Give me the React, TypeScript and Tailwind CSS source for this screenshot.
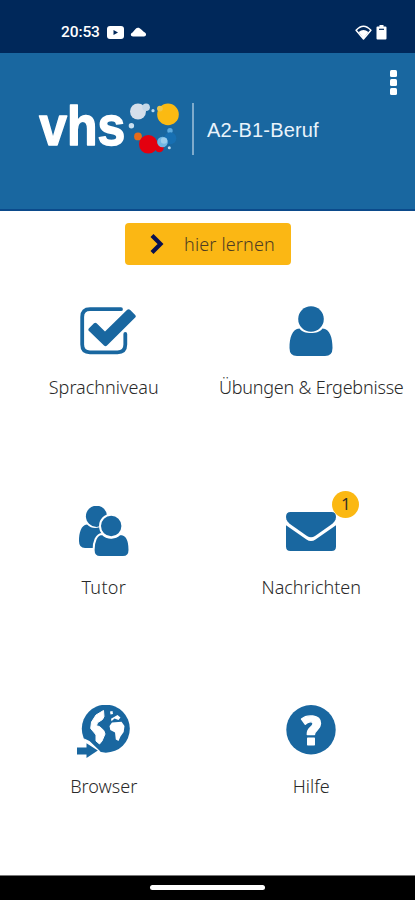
import type { ReactNode } from "react";

const BLUE = "#1967a0";

function StatusBar() {
  return (
    <div className="flex h-[53px] items-start justify-between bg-[#00285a] pr-[28px] pl-[61px] pt-[24px] text-white">
      <div className="flex h-[17px] items-center">
        <span className="w-[39px] whitespace-nowrap font-['Roboto',sans-serif] text-[15.5px] leading-[17px] font-medium tracking-[-0.1px]">
          20:53
        </span>
        <svg className="ml-[7px]" width="17" height="13" viewBox="0 0 17 13">
          <rect width="17" height="13" rx="3" fill="#fff" />
          <path d="M6.500 4v5l4.500-2.500z" fill="#00285a" />
        </svg>
        <svg className="mb-[2px] ml-[6px]" width="17" height="10" viewBox="0 0 17 10">
          <path d="M3 9.500C.5 9.500 0 6.500 2.500 5.500L5.500 2C7 .2 9.500 .4 11 2.300L14 5C17 6 16.500 9.500 14 9.500z" fill="#fff" />
        </svg>
      </div>
      <div className="flex h-[17px] items-center">
        <svg width="17" height="15" viewBox="0 0 17 15">
          <path d="M1.100 5.200Q8.500-2.800 15.900 5.200L8.500 14z" fill="none" stroke="#fff" strokeWidth="1.500" strokeLinejoin="round" />
          <path d="M3.600 7Q8.500 3.200 13.400 7L8.500 13.500z" fill="#fff" />
        </svg>
        <svg className="ml-[4px]" width="11" height="15" viewBox="0 0 11 15">
          <path d="M3.500 0h4v1.500H9.500Q10.500 1.500 10.500 2.500V13.500Q10.500 14.500 9.500 14.500H1.500Q.5 14.500.5 13.500V2.500Q.5 1.500 1.500 1.500H3.500z" fill="#fff" />
          <path d="M3 3.700h5v1.200H3z" fill="#00285a" />
        </svg>
      </div>
    </div>
  );
}

function VhsLogo() {
  return (
    <svg width="146" height="76" viewBox="35 88 146 76" className="shrink-0">
      <text x="39.200" y="144.800" textLength="86" lengthAdjust="spacingAndGlyphs" fontFamily="Liberation Sans, sans-serif" fontWeight="700" fontSize="55.500" fill="#fff" stroke="#fff" strokeWidth="1.500" strokeLinejoin="round">
        vhs
      </text>
      <circle cx="138" cy="111.500" r="8" fill="#d5dfeb" />
      <circle cx="146.100" cy="107.300" r="3.800" fill="#c4d8e8" />
      <circle cx="153" cy="110.700" r="1.600" fill="#b9d9ef" />
      <circle cx="168" cy="114.400" r="10.800" fill="#fbba12" />
      <circle cx="159.900" cy="108.600" r="2.900" fill="#eec64b" />
      <circle cx="131.400" cy="125.700" r="2.700" fill="#c9e0f1" />
      <circle cx="170" cy="130.700" r="2.700" fill="#5cabe0" />
      <circle cx="170.300" cy="138.300" r="6" fill="#176fb2" />
      <circle cx="138" cy="136.400" r="3.900" fill="#e66b19" />
      <circle cx="148.300" cy="144.300" r="9.300" fill="#e3000f" />
      <circle cx="159.300" cy="147.800" r="4.400" fill="#e3000f" />
      <circle cx="162.500" cy="142" r="5.300" fill="#70b7e4" />
      <circle cx="164" cy="140.600" r="3.200" fill="#9bcdec" />
      <circle cx="169.300" cy="147.700" r="1.500" fill="#b9d9ef" />
    </svg>
  );
}

function Header() {
  return (
    <header className="flex h-[158px] items-start border-b-2 border-[#0b4a8b] bg-[#1967a0] pl-[35px]">
      <div className="flex pt-[35px]">
        <VhsLogo />
      </div>
      <div className="mt-[50px] ml-[11px] h-[52px] w-[2px] bg-[#7fabcc]" />
      <div className="mt-[65px] ml-[13px] w-[113px] whitespace-nowrap font-['Liberation_Sans',Arial,sans-serif] text-[20px] leading-[24px] tracking-[0.15px] text-[#e9f3fb]">
        A2-B1-Beruf
      </div>
      <button aria-label="Menü" className="mt-[17px] mr-[18px] ml-auto flex flex-col gap-[2px]">
        <span className="size-[7px] rounded-[1.5px] bg-white" />
        <span className="size-[7px] rounded-[1.5px] bg-white" />
        <span className="size-[7px] rounded-[1.5px] bg-white" />
      </button>
    </header>
  );
}

function CheckIcon() {
  return (
    <svg width="56" height="50" viewBox="0 0 56 50">
      <path d="M41 3.200H10Q2.200 3.200 2.200 11V38.500Q2.200 46.300 10 46.300H37.500Q45.300 46.300 45.300 38.500V28" fill="none" stroke={BLUE} strokeWidth="3.800" strokeLinecap="round" />
      <path d="M9 22.300L14 17.300Q15.300 16 16.600 17.300L25 25.600L47.200 3.800Q48.600 2.500 50 3.800L55.200 8.900Q56.400 10.200 55.200 11.500L27 39.500Q25.500 40.900 24 39.500L9 25Q7.700 23.600 9 22.300Z" fill={BLUE} />
    </svg>
  );
}

function UserIcon() {
  return (
    <svg width="44" height="50" viewBox="0 0 44 50">
      <circle cx="22" cy="13" r="12.800" fill={BLUE} />
      <path d="M10.500 22.500C14 28.600 30 28.600 33.500 22.500C41 23 43.500 32 43.500 42Q43.500 50 36 50H8Q.5 50 .5 42C.5 32 3 23 10.500 22.500Z" fill={BLUE} />
    </svg>
  );
}

function UsersIcon() {
  return (
    <svg width="50" height="50" viewBox="0 0 50 50">
      <circle cx="17.500" cy="10.300" r="10.600" fill={BLUE} />
      <path d="M8 18.500C13 23.500 20 22.500 24 19L27 42H6Q0 42 0 35C0 27 2 19 8 18.500Z" fill={BLUE} />
      <g fill={BLUE} stroke="#fff" strokeWidth="2">
        <path d="M23.500 28C28 33 37 33 41 28C48 28 50.500 36 50.500 44Q50.500 51 44 51H21Q14.600 51 14.600 44C14.600 36 17 28 23.500 28Z" />
        <circle cx="32.200" cy="20" r="11.200" />
      </g>
    </svg>
  );
}

function MailIcon() {
  return (
    <svg width="50" height="39" viewBox="0 0 50 39">
      <path d="M4.500 0H45.500Q50 0 50 5C50 8.500 47.500 11 45 12.800L29 24Q25 26.500 21 24L5 12.800C2.500 11 0 8.500 0 5Q0 0 4.500 0Z" fill={BLUE} />
      <path d="M0 13.200L20.500 27.500Q25 30.500 29.500 27.500L50 13.200V34.500Q50 39 45.500 39H4.500Q0 39 0 34.500Z" fill={BLUE} />
    </svg>
  );
}

function GlobeIcon() {
  return (
    <svg width="53" height="53" viewBox="0 0 53 53">
      <circle cx="28.800" cy="23.700" r="24" fill={BLUE} />
      <g fill="#fff">
        <path d="M26.500 5.500L19 10L14.500 17L13.700 23.500L17.500 28L19 30V36L22.500 39L25 36L28 29L26.800 25.500L22.500 21.500L19.500 20.800L20.500 17.700L25.500 14.500L27 11.500Z" stroke="#fff" strokeLinejoin="round" />
        <path d="M33 6.500L35.500 6L36 9L33.500 9.500Z" />
        <path d="M34 13.800L40.500 10L43.500 12.500L41.500 15L37.500 13.500L34.500 16.200Z" />
        <path d="M35 17.500L44.500 16.800L47.500 21L46.700 27L43.500 31.500L41.500 36L38.800 34.500L38 27.500L33.300 25L32.500 21Z" />
        <path d="M7.200 33.500L12.500 36L23.500 46.500L12 53L2 49V38H7Z" />
      </g>
      <path d="M0 42.500H9.500V38.300L20.800 45.600L9.500 53V49.500H0Z" fill={BLUE} />
    </svg>
  );
}

function HelpIcon() {
  return (
    <svg width="50" height="50" viewBox="0 0 50 50">
      <circle cx="25" cy="24.800" r="24.700" fill={BLUE} />
      <path d="M15.500 14C20.500 9.500 34.500 9 34.500 18.500C34.500 24.500 28.500 25 28.500 29.500H21.300C20.800 22.500 27 22.200 27 18.800C27 15.800 22 16.500 19.300 19.300Z" fill="#fff" stroke="#fff" strokeWidth="1.400" strokeLinejoin="round" />
      <rect x="21" y="32.500" width="8" height="8" rx=".7" fill="#fff" />
    </svg>
  );
}

interface TileProps {
  icon: ReactNode;
  label: string;
  labelClass?: string;
  iconClass?: string;
  badge?: string;
}

function Tile({ icon, label, labelClass = "", iconClass = "", badge }: TileProps) {
  return (
    <div className="flex h-[199.6px] flex-col items-center">
      <div className={`relative flex h-[53px] items-start justify-center ${iconClass}`}>
        {icon}
        {badge && (
          <span className="absolute -top-[15px] -right-[23px] flex size-[27px] items-center justify-center rounded-full bg-[#fbb812] font-['Noto_Sans',sans-serif] text-[17px] text-[#363126]">
            {badge}
          </span>
        )}
      </div>
      <span className={`mt-[15px] whitespace-nowrap font-['Noto_Sans',sans-serif] text-[18px] leading-[26px] font-light text-[#292929] ${labelClass}`}>
        {label}
      </span>
    </div>
  );
}

export default function App() {
  return (
    <div className="flex h-[900px] w-[415px] flex-col overflow-hidden bg-white">
      <StatusBar />
      <Header />
      <main className="flex min-h-0 flex-1 flex-col">
        <button className="mt-[11.5px] ml-[125px] flex h-[42px] w-[166px] shrink-0 items-center rounded-[4px] bg-[#fbb714] pl-[25px]">
          <svg width="14" height="20" viewBox="0 0 14 20">
            <path d="M2 1.500L10.500 10L2 18.500" fill="none" stroke="#09104f" strokeWidth="4.200" />
          </svg>
          <span className="ml-[20px] whitespace-nowrap font-['Noto_Sans',sans-serif] text-[18px] leading-[26px] font-light tracking-[0.15px] text-[#4f3c22]">
            hier lernen
          </span>
        </button>
        <div className="mt-[41.5px] grid grid-cols-2">
          <Tile icon={<CheckIcon />} label="Sprachniveau" iconClass="left-[4px]" />
          <Tile icon={<UserIcon />} label="Übungen & Ergebnisse" labelClass="tracking-[-0.22px]" />
          <Tile icon={<UsersIcon />} label="Tutor" labelClass="tracking-[0.3px]" />
          <Tile icon={<MailIcon />} label="Nachrichten" iconClass="pt-[6px]" badge="1" />
          <Tile icon={<GlobeIcon />} label="Browser" />
          <Tile icon={<HelpIcon />} label="Hilfe" />
        </div>
      </main>
      <footer className="flex h-[25px] shrink-0 items-start justify-center border-t border-[#777] bg-black pt-[9px]">
        <div className="h-[5px] w-[115px] rounded-full bg-white" />
      </footer>
    </div>
  );
}
